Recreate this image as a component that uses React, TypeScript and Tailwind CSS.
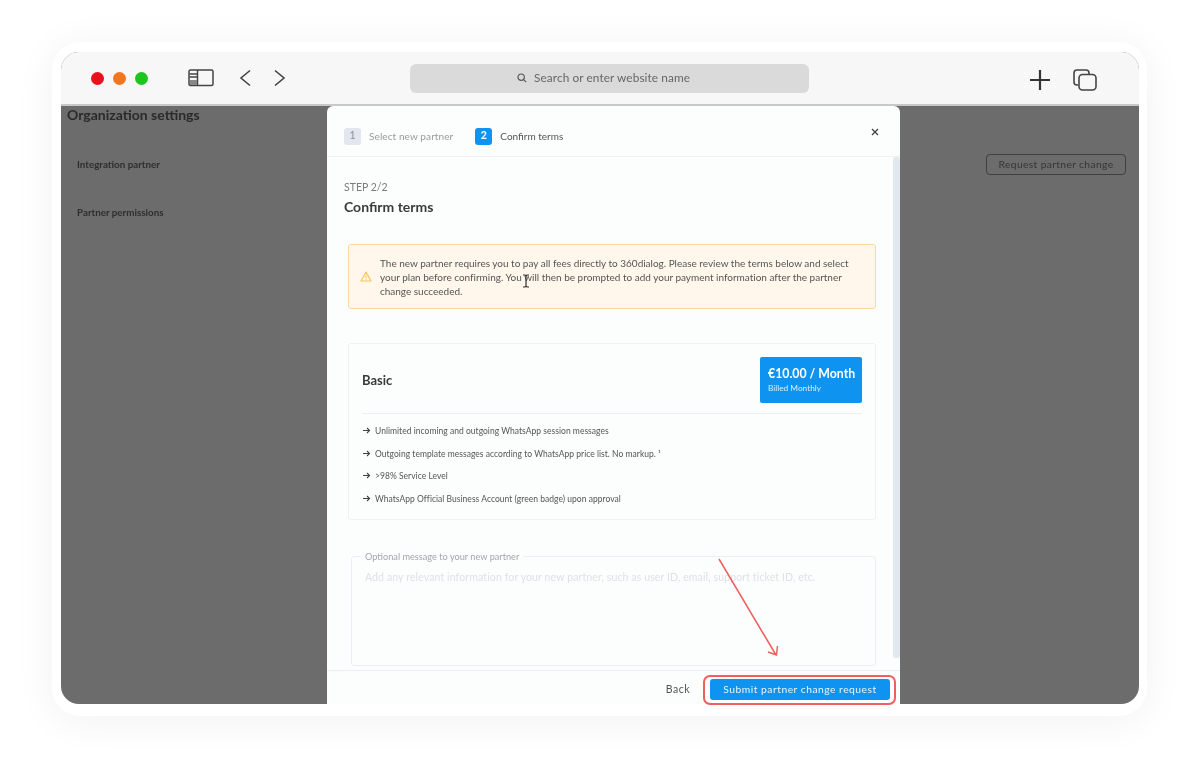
import React from "react";

const font = { fontFamily: '"Lato", "Noto Sans", sans-serif' };

const features = [
  "Unlimited incoming and outgoing WhatsApp session messages",
  "Outgoing template messages according to WhatsApp price list. No markup. ¹",
  ">98% Service Level",
  "WhatsApp Official Business Account (green badge) upon approval",
];

function Arrow() {
  return (
    <svg width="9" height="9" viewBox="0 0 9 9" className="mb-[2px] shrink-0" fill="none" stroke="#444" strokeWidth="1.1">
      <path d="M1 4.5h6.5M5 2l2.5 2.5L5 7" />
    </svg>
  );
}

export default function App() {
  return (
    <div style={font} className="h-[779px] w-[1200px] overflow-hidden bg-white pl-[52px] pt-[42px] [filter:blur(0.4px)]">
      <div className="h-[674px] w-[1095px] rounded-[28px] bg-white pb-[12px] pl-[9px] pr-[8px] pt-[10px] shadow-[0_4px_40px_rgba(0,0,0,0.06)]">
        <div className="relative h-full">
          <div className="flex h-full flex-col overflow-hidden rounded-[18px] bg-[#6c6c6c]">
            {/* browser bar */}
            <div className="flex h-[54px] shrink-0 items-center border-b-2 border-[#c8c8c8] bg-[#f7f7f7] pl-[30px] pr-[41px]">
              <div className="flex w-[97px] items-center gap-[9px]">
                <span className="h-[13px] w-[13px] rounded-full bg-[#e8101c]" />
                <span className="h-[13px] w-[13px] rounded-full bg-[#f2761f]" />
                <span className="h-[13px] w-[13px] rounded-full bg-[#1fc51f]" />
              </div>
              <svg width="26" height="18" viewBox="0 0 26 18" fill="none" stroke="#444" strokeWidth="1.5">
                <rect x="1" y="1" width="24" height="15.5" rx="1.5" />
                <path d="M9.5 1v15.5M1.5 5h8M1.5 8h8" />
                <path d="M2 11h7v5H2z" fill="#888" stroke="none" />
              </svg>
              <svg className="ml-[25px]" width="12" height="18" viewBox="0 0 12 18" fill="none" stroke="#444" strokeWidth="1.6">
                <path d="M11 1.5 2 9l9 7.5" />
              </svg>
              <svg className="ml-[23px]" width="12" height="18" viewBox="0 0 12 18" fill="none" stroke="#444" strokeWidth="1.6">
                <path d="M1 1.5 10 9l-9 7.5" />
              </svg>
              <div className="ml-[124px] flex h-[29px] w-[399px] items-center gap-[7px] rounded-[6px] bg-[#dadada] pl-[107px] text-[11.8px] tracking-[0.1px] text-[#666]">
                <svg width="10" height="10" viewBox="0 0 10 10" fill="none" stroke="#555" strokeWidth="1.2">
                  <circle cx="4.2" cy="4.2" r="3.2" />
                  <path d="m6.6 6.6 2.6 2.6" />
                </svg>
                Search or enter website name
              </div>
              <svg className="ml-[219px] mt-[4px]" width="24" height="24" viewBox="0 0 24 24" fill="none" stroke="#333" strokeWidth="2.2">
                <path d="M12 2v20M2 12h20" />
              </svg>
              <svg className="ml-[21px] mt-[4px]" width="24" height="22" viewBox="0 0 24 22" fill="none" stroke="#444" strokeWidth="1.6">
                <path d="M5 16H4a3 3 0 0 1-3-3V4a3 3 0 0 1 3-3h9a3 3 0 0 1 3 3v1" />
                <rect x="6" y="5.5" width="17" height="15.5" rx="3.5" />
              </svg>
            </div>

            {/* page behind */}
            <div className="relative flex-1">
              <h1 className="pl-[6px] text-[14px] font-bold leading-[17px] text-[#2a2a2a]">Organization settings</h1>
              <div className="flex items-center justify-between pl-[16px] pr-[13px] pt-[31px]">
                <span className="text-[9.8px] font-bold text-[#2e2e2e]">Integration partner</span>
                <button className="h-[21px] w-[140px] rounded-[4px] border border-[#3f3f3f] text-[10.3px] tracking-[0.35px] text-[#363636]">
                  Request partner change
                </button>
              </div>
              <div className="pl-[16px] pt-[30px] text-[9.8px] font-bold text-[#2e2e2e]">Partner permissions</div>

              {/* modal */}
              <div className="absolute bottom-0 left-[266px] top-0 flex w-[573px] flex-col rounded-t-[6px] bg-[#fcfdfd]">
                <div className="flex h-[51px] shrink-0 items-center border-b border-[#eef0f4] pl-[17px] pr-[21px] pt-[10px] text-[10px]">
                  <span className="flex h-[17px] w-[17px] items-center justify-center rounded-[3px] bg-[#e2e6ee] text-[10.5px] text-[#8a8f98]">1</span>
                  <span className="ml-[8px] tracking-[0.1px] text-[#9a9a9a]">Select new partner</span>
                  <span className="ml-[22px] flex h-[17px] w-[17px] items-center justify-center rounded-[3px] bg-[#0f93f0] text-[10.5px] font-bold text-white">2</span>
                  <span className="ml-[8px] text-[#555]">Confirm terms</span>
                  <svg className="mb-[9px] ml-auto" width="8" height="8" viewBox="0 0 8 8" fill="none" stroke="#444" strokeWidth="1.3">
                    <path d="m1 1 6 6M7 1 1 7" />
                  </svg>
                </div>

                <div className="relative min-h-0 flex-1 pl-[17px] pr-[23px] pt-[23px]">
                  <div className="absolute right-0 top-0 h-[501px] w-[7px] rounded-[3px] bg-[#e3e7f0]" />
                  <div className="text-[10.5px] leading-[14px] text-[#7b7b7b]">STEP 2/2</div>
                  <div className="mt-[4px] text-[14px] font-bold leading-[18px] text-[#3a3a3a]">Confirm terms</div>

                  <div className="ml-[4px] mt-[28px] flex h-[65px] w-[528px] items-center rounded-[3px] border border-[#f7dc9c] bg-[#fff7ec] pl-[11px] pr-[20px]">
                    <svg width="12" height="11" viewBox="0 0 12 11" fill="none" stroke="#f5c252" strokeWidth="1.1" className="shrink-0">
                      <path d="M6 1 11 10H1z" strokeLinejoin="round" />
                      <path d="M6 4.2v3M6 8v.8" />
                    </svg>
                    <p className="ml-[8px] text-[10px] leading-[14px] tracking-[-0.01px] text-[#555]">
                      The new partner requires you to pay all fees directly to 360dialog. Please review the terms below and select your plan before confirming. You will then be prompted to add your payment information after the partner change succeeded.
                    </p>
                  </div>

                  <div className="ml-[4px] mt-[34px] h-[177px] w-[528px] rounded-[3px] border border-[#eff1f5] px-[13px] pt-[13px]">
                    <div className="flex h-[57px] items-start justify-between border-b border-[#eceff4]">
                      <span className="mt-[14px] text-[13px] font-bold leading-[18px] text-[#3a3a3a]">Basic</span>
                      <div className="h-[46px] w-[102px] rounded-[2px] bg-[#0f93f0] pl-[8px] pt-[9px] text-white">
                        <div className="text-[12.3px] font-bold leading-[15px]">€10.00 / Month</div>
                        <div className="text-[8.3px] leading-[14px] text-[#d9efff]">Billed Monthly</div>
                      </div>
                    </div>
                    <ul className="mt-[11px] flex flex-col gap-[9.7px] text-[8.5px] leading-[13px] text-[#555]">
                      {features.map((f) => (
                        <li key={f} className="flex items-center gap-[4px]">
                          <Arrow />
                          <span className="tracking-[0.03px]">{f}</span>
                        </li>
                      ))}
                    </ul>
                  </div>

                  <fieldset className="ml-[7px] mt-[30px] h-[116px] w-[525px] rounded-[3px] border border-[#eceef4] pl-[9px] pr-[12px]">
                    <legend className="relative top-[1px] px-[4px] text-[9.2px] leading-[12px] text-[#a3a5ab]">Optional message to your new partner</legend>
                    <div className="pl-[4px] pt-[8px] text-[10.5px] leading-[14px] tracking-[0.12px] text-[#dfe1e7]">
                      Add any relevant information for your new partner, such as user ID, email, support ticket ID, etc.
                    </div>
                  </fieldset>
                </div>

                <div className="flex h-[34px] shrink-0 items-start justify-end border-t border-[#eceef3] pr-[10px] pt-[8px]">
                  <span className="mr-[20px] text-[10.5px] leading-[21px] tracking-[0.5px] text-[#555]">Back</span>
                  <button className="h-[21px] w-[180px] rounded-[3px] bg-[#0f93f0] text-[10.3px] tracking-[0.5px] text-[#e6f5ff]">
                    Submit partner change request
                  </button>
                </div>
              </div>
            </div>
          </div>

          {/* annotations */}
          <div className="pointer-events-none absolute left-[642px] top-[623px] h-[30px] w-[193px] rounded-[7px] border-2 border-[#ee5f5f]" />
          <svg className="pointer-events-none absolute left-[640px] top-[490px]" width="100" height="125" viewBox="0 0 100 125" fill="none" stroke="#ee5f5f" strokeWidth="1.5">
            <path d="M18 17 75 113M67 110l8.5 3 1-9" />
          </svg>
          <svg className="pointer-events-none absolute left-[461px] top-[222px]" width="8" height="14" viewBox="0 0 8 14" fill="none" stroke="#333" strokeWidth="1.2">
            <path d="M1 1h2l1 1 1-1h2M4 2v10M1 13h2l1-1 1 1h2" />
          </svg>
        </div>
      </div>
    </div>
  );
}
